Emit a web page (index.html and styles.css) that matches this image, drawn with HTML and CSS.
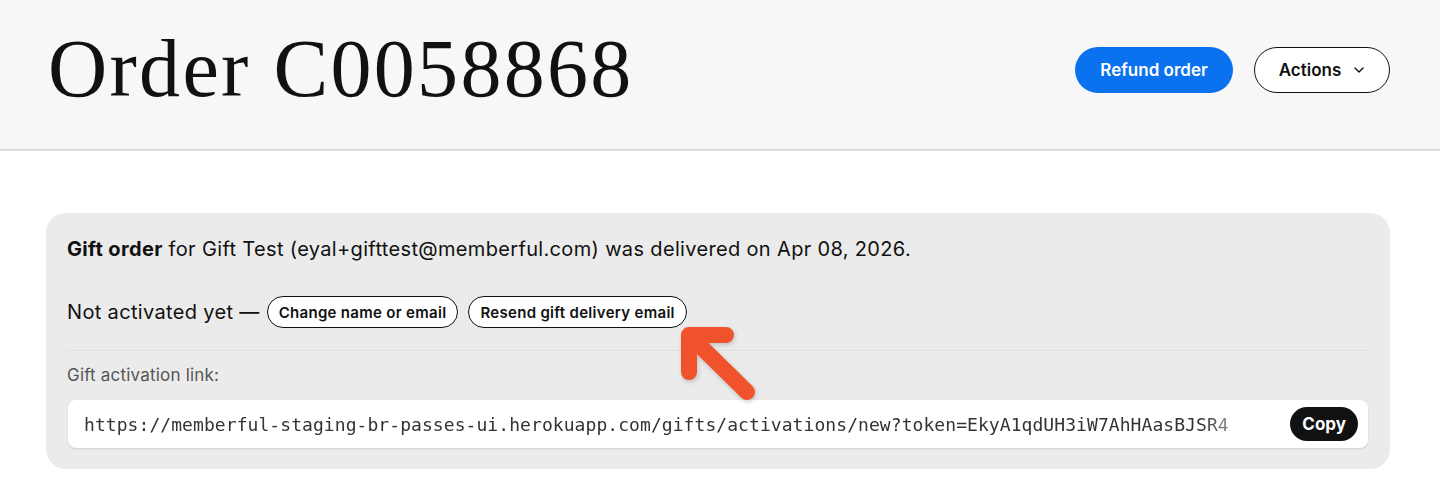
FILE: index.html
```html
<!DOCTYPE html>
<html>
<head>
<meta charset="utf-8">
<link rel="stylesheet" href="styles.css">
</head>
<body>
<header class="page-header">
  <h1 class="title">Order C0058868</h1>
  <div class="header-actions">
    <button class="btn btn-primary">Refund order</button>
    <button class="btn btn-outline">Actions
      <svg class="chev" width="12" height="8" viewBox="0 0 12 8"><path d="M2 2 L6 6 L10 2" fill="none" stroke="#111" stroke-width="1.4" stroke-linecap="round" stroke-linejoin="round"/></svg>
    </button>
  </div>
</header>
<main class="content">
  <section class="gift-card">
    <p class="gift-line"><strong>Gift order</strong> for Gift Test (eyal+gifttest@memberful.com) was delivered on Apr 08, 2026.</p>
    <div class="status-row">
      <span>Not activated yet —</span>
      <button class="pill">Change name or email</button>
      <button class="pill">Resend gift delivery email</button>
    </div>
    <div class="divider"></div>
    <div class="link-label">Gift activation link:</div>
    <div class="link-box">
      <span class="link-text">https://memberful-staging-br-passes-ui.herokuapp.com/gifts/activations/new?token=EkyA1qdUH3iW7AhHAasBJSR4</span>
      <button class="copy">Copy</button>
    </div>
    <svg class="arrow" width="100" height="90" viewBox="0 0 100 90"><path d="M19 15 L77 72 M19 15 L19 52 M19 15 L56 15" fill="none" stroke="#f0522b" stroke-width="16" stroke-linecap="round" stroke-linejoin="miter"/></svg>
  </section>
</main>
</body>
</html>
```
FILE: styles.css
```css
* { box-sizing: border-box; }
html, body { margin: 0; padding: 0; background: #fff; }
body { font-family: Inter, "Noto Sans", sans-serif; color: #111; }

.page-header {
  height: 151px;
  background: #f7f7f7;
  border-bottom: 2px solid #dcdcdc;
  display: flex;
  align-items: center;
  justify-content: space-between;
  padding: 0 50px 0 48px;
}
.title {
  margin: 0;
  font-family: "Liberation Serif", "DejaVu Serif", serif;
  font-weight: 400;
  font-size: 82px;
  letter-spacing: 2.3px;
  color: #111;
  line-height: 1;
  margin-top: -12px;
}
.header-actions { display: flex; gap: 21px; margin-top: -10px; }
.btn {
  height: 46px;
  border-radius: 23px;
  font-family: Inter, sans-serif;
  font-size: 17px;
  font-weight: 600;
  padding: 0 22px;
  display: flex;
  align-items: center;
  cursor: pointer;
}
.btn-primary { background: #0a72ef; color: #fff; border: none; width: 158px; justify-content: center; }
.btn-outline { background: #fff; color: #111; border: 1.5px solid #111; width: 136px; justify-content: center; gap: 12px; }
.chev { margin-top: 1px; }

.content { padding: 62px 50px 0 46px; }
.gift-card {
  position: relative;
  background: #ebebeb;
  border-radius: 20px;
  padding: 23px 21px 22px 21px;
  height: 256px;
}
.gift-line { margin: 0; font-size: 20px; line-height: 26px; color: #111; letter-spacing: 0.34px; }
.gift-line strong { font-weight: 700; }
.status-row {
  display: flex;
  align-items: center;
  gap: 10px;
  margin-top: 34px;
  font-size: 20px;
  letter-spacing: 0.34px;
}
.status-row span { margin-right: -3px; }
.pill {
  height: 32px;
  border: 1.5px solid #111;
  border-radius: 16px;
  background: #fff;
  font-family: Inter, sans-serif;
  font-size: 15px;
  font-weight: 600;
  letter-spacing: 0.3px;
  color: #111;
  padding: 0 11px;
}
.arrow {
  position: absolute;
  left: 624px;
  top: 107px;
  filter: drop-shadow(1px 2px 2px rgba(0,0,0,0.18));
}
.divider { height: 1px; background: #dedede; margin-top: 22px; }
.link-label { font-size: 17px; color: #555; margin-top: 14px; line-height: 20px; letter-spacing: 0.2px; }
.link-box {
  margin-top: 15px;
  background: #fff;
  border-radius: 8px;
  height: 48px;
  box-shadow: 0 1px 2px rgba(0,0,0,0.12);
  display: flex;
  align-items: center;
  justify-content: space-between;
  padding: 0 10px 0 16px;
  margin-left: 1px;
  margin-right: 1px;
}
.link-text {
  display: inline-block;
  font-family: "DejaVu Sans Mono", monospace;
  font-size: 18px;
  letter-spacing: 0.065px;
  color: #333;
  -webkit-mask-image: linear-gradient(to right, #000 calc(100% - 28px), rgba(0,0,0,0.55));
  mask-image: linear-gradient(to right, #000 calc(100% - 28px), rgba(0,0,0,0.55));
}
.copy {
  height: 34px;
  border-radius: 17px;
  background: #111;
  color: #fff;
  border: none;
  font-family: Inter, sans-serif;
  font-size: 17px;
  font-weight: 700;
  padding: 0 12px;
}
```
